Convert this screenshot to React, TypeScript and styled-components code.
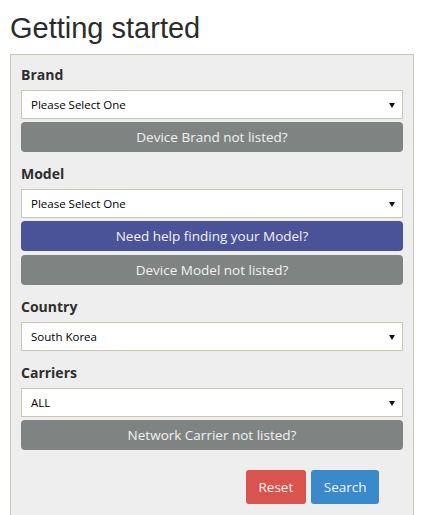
import React from "react";
import styled, { createGlobalStyle } from "styled-components";

const Global = createGlobalStyle`
  html, body { margin: 0; padding: 0; background: #ffffff; }
  body { font-family: "Open Sans", "Liberation Sans", sans-serif; }
`;

const Page = styled.div`
  padding: 12px 9px 0 10px;
`;

const Title = styled.h1`
  margin: 0 0 10px 0;
  font-family: "Liberation Sans", Arial, sans-serif;
  font-weight: normal;
  font-size: 29px;
  line-height: 32px;
  color: #2b2b2b;
`;

const Panel = styled.div`
  background: #eeeeee;
  border: 1px solid #c9c6b6;
  padding: 9px 10px 14px 10px;
  display: flex;
  flex-direction: column;
`;

const Section = styled.div`
  display: flex;
  flex-direction: column;
  & + & { margin-top: 11px; }
`;

const Label = styled.label`
  font-family: "Open Sans", sans-serif;
  font-weight: 700;
  font-size: 14px;
  line-height: 20px;
  color: #2e2e2e;
  margin-top: 1px;
  margin-bottom: 5px;
`;

const SelectWrap = styled.div`
  position: relative;
  &::after {
    content: "";
    position: absolute;
    right: 8px;
    top: 50%;
    margin-top: -2px;
    border-left: 3.5px solid transparent;
    border-right: 3.5px solid transparent;
    border-top: 5px solid #111;
    pointer-events: none;
  }
`;

const Select = styled.select`
  appearance: none;
  -webkit-appearance: none;
  display: block;
  width: 100%;
  height: 29px;
  box-sizing: border-box;
  border: 1px solid #c9c6b3;
  border-radius: 0;
  background: #ffffff;
  padding: 0 20px 0 9px;
  font-family: "Open Sans", sans-serif;
  font-size: 11.5px;
  color: #000;
  outline: none;
`;

const WideButton = styled.button<{ $tone: "gray" | "indigo" }>`
  display: block;
  width: 100%;
  height: 30px;
  margin-top: 3px;
  & + & { margin-top: 4px; }
  border: none;
  border-radius: 4px;
  background: ${(p) => (p.$tone === "indigo" ? "#4b5398" : "#7f8483")};
  color: #f2f2f2;
  font-family: "Open Sans", sans-serif;
  font-size: 13.5px;
  cursor: pointer;
`;

const Actions = styled.div`
  display: flex;
  justify-content: flex-end;
  gap: 5px;
  margin-top: 20px;
  padding-right: 24px;
`;

const ActionButton = styled.button<{ $tone: "red" | "blue" }>`
  height: 34px;
  padding: 0 ${(p) => (p.$tone === "red" ? "13px" : "12.5px")};
  border: none;
  border-radius: 3px;
  background: ${(p) => (p.$tone === "red" ? "#d9534f" : "#3a89cb")};
  color: #f4f4f4;
  font-family: "Open Sans", sans-serif;
  font-size: 13.5px;
  cursor: pointer;
`;

function Field({
  label,
  value,
  options,
  children,
}: {
  label: string;
  value: string;
  options: string[];
  children?: React.ReactNode;
}) {
  return (
    <Section>
      <Label>{label}</Label>
      <SelectWrap>
        <Select defaultValue={value}>
          {options.map((o) => (
            <option key={o}>{o}</option>
          ))}
        </Select>
      </SelectWrap>
      {children}
    </Section>
  );
}

export default function App() {
  return (
    <>
      <Global />
      <Page>
        <Title>Getting started</Title>
        <Panel>
          <Field label="Brand" value="Please Select One" options={["Please Select One"]}>
            <WideButton $tone="gray">Device Brand not listed?</WideButton>
          </Field>
          <Field label="Model" value="Please Select One" options={["Please Select One"]}>
            <WideButton $tone="indigo">Need help finding your Model?</WideButton>
            <WideButton $tone="gray">Device Model not listed?</WideButton>
          </Field>
          <Field label="Country" value="South Korea" options={["South Korea"]} />
          <Field label="Carriers" value="ALL" options={["ALL"]}>
            <WideButton $tone="gray">Network Carrier not listed?</WideButton>
          </Field>
          <Actions>
            <ActionButton $tone="red">Reset</ActionButton>
            <ActionButton $tone="blue">Search</ActionButton>
          </Actions>
        </Panel>
      </Page>
    </>
  );
}
